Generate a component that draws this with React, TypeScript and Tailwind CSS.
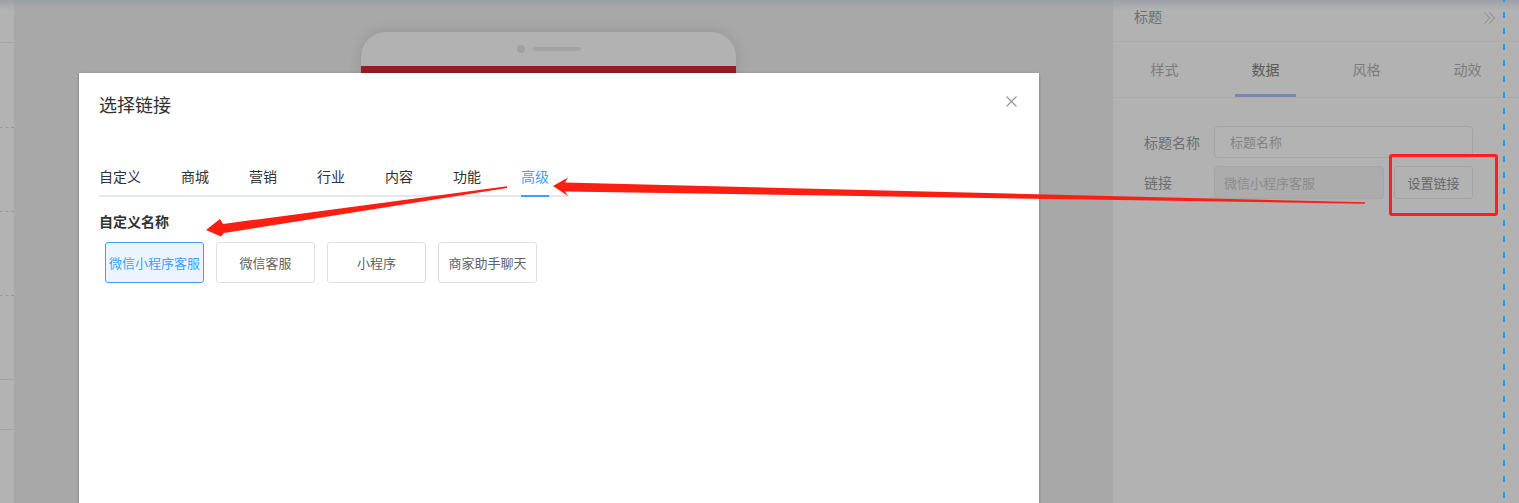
import React from "react";

const tabs = ["自定义", "商城", "营销", "行业", "内容", "功能", "高级"];
const options = ["微信小程序客服", "微信客服", "小程序", "商家助手聊天"];
const panelTabs = ["样式", "数据", "风格", "动效"];

function Arrows() {
  return (
    <svg
      className="absolute left-0 top-0 pointer-events-none"
      width={1519}
      height={503}
      viewBox="0 0 1519 503"
    >
      <polygon
        fill="#fb1e12"
        points="553,186 568,177.5 565,182.5 1365,202.3 1365,203.7 565,191.5 568,196"
      />
      <polygon
        fill="#fb1e12"
        points="206,230 220,219 223,224 507,186.3 507,188 224,233 221,236.5"
      />
      <line
        x1={1504}
        y1={0}
        x2={1504}
        y2={503}
        stroke="#1a9dff"
        strokeWidth={2}
        strokeDasharray="6 10"
        strokeDashoffset={4}
      />
    </svg>
  );
}

export default function App() {
  return (
    <div className="relative w-[1519px] h-[503px] overflow-hidden bg-[#a8a8a8] font-['Noto_Sans_CJK_SC',sans-serif]">
      <div className="flex h-full">
        {/* left strip */}
        <div className="w-[14px] h-full bg-[#b3b3b3] flex flex-col shrink-0">
          <div className="h-[43px] border-b border-[#a5a5a5]" />
          <div className="h-[85px] border-b border-dashed border-[#999999]" />
          <div className="h-[84px] border-b border-dashed border-[#999999]" />
          <div className="h-[84px] border-b border-dashed border-[#999999]" />
          <div className="h-[84px] border-b border-[#a3a3a3]" />
          <div className="h-[50px] border-b border-[#a3a3a3]" />
        </div>

        {/* canvas */}
        <div className="flex-1 pl-[347px] pt-[32px]">
          <div className="w-[375px] shadow-[0_0_14px_rgba(0,0,0,0.12)] rounded-t-[25px] overflow-hidden">
            <div className="h-[34px] bg-[#b2b2b2] flex items-center justify-center gap-2">
              <div className="w-[8px] h-[8px] rounded-full bg-[#a1a1a1]" />
              <div className="w-[48px] h-[4px] rounded-full bg-[#a3a3a3]" />
            </div>
            <div className="h-[40px] bg-[#8f2020]" />
          </div>
        </div>

        {/* right panel */}
        <div className="w-[406px] shrink-0 bg-[#b2b2b2] h-full">
          <div className="h-[42px] border-b border-[#aaaaaa] flex items-start pl-[21px] pt-[6px] relative">
            <span className="text-[14px] leading-[20px] text-[#6f6f6f]">标题</span>
            <svg
              className="absolute left-[371px] top-[12px]"
              width={12}
              height={12}
              viewBox="0 0 12 12"
              fill="none"
              stroke="#8a8a8a"
              strokeWidth={1}
            >
              <polyline points="0.5,0.5 5.5,6 0.5,11.5" />
              <polyline points="5.5,0.5 10.5,6 5.5,11.5" />
            </svg>
          </div>
          <div className="h-[56px] border-b border-[#aaaaaa] flex pl-[1px]">
            {panelTabs.map((t, i) => (
              <div
                key={t}
                className={
                  "relative w-[101px] h-full flex items-center justify-center text-[14px] " +
                  (i === 1 ? "text-[#5a5a5a]" : "text-[#7c7c7c]")
                }
              >
                {t}
                {i === 1 && (
                  <div className="absolute left-[20px] right-[20px] bottom-0 h-[3px] bg-[#7a86b4]" />
                )}
              </div>
            ))}
          </div>
          <div className="pl-[31px] pt-[28px] flex flex-col gap-[8px]">
            <div className="flex items-center">
              <div className="w-[70px] text-[14px] text-[#6e6e6e]">标题名称</div>
              <div className="w-[259px] h-[32px] border border-[#a4a4a4] rounded-[4px] bg-[#b3b3b3] pl-[15px] flex items-center text-[13px] text-[#838383]">
                标题名称
              </div>
            </div>
            <div className="flex items-center">
              <div className="w-[70px] text-[14px] text-[#6e6e6e]">链接</div>
              <div className="w-[170px] h-[33px] border border-[#a6a6a6] rounded-[4px] bg-[#acacac] pl-[9px] flex items-center text-[13px] text-[#8b8b8b]">
                微信小程序客服
              </div>
              <div className="ml-[10px] w-[79px] h-[33px] border border-[#a4a4a4] rounded-[3px] bg-[#b2b2b2] flex items-center justify-center text-[13px] text-[#666666]">
                设置链接
              </div>
            </div>
          </div>
        </div>
      </div>

      {/* top shade */}
      <div className="absolute left-0 top-0 w-full h-[10px] bg-gradient-to-b from-[#9ca0a7] to-transparent pointer-events-none" />

      {/* modal */}
      <div className="absolute left-[79px] top-[73px] w-[960px] h-[440px] bg-white shadow-[0_1px_3px_rgba(0,0,0,0.3)]">
        <div className="pl-[20px] pt-[19px] text-[18px] leading-[24px] text-[#303133]">选择链接</div>
        <svg
          className="absolute left-[927px] top-[23px]"
          width={11}
          height={11}
          viewBox="0 0 11 11"
          stroke="#909399"
          strokeWidth={1.1}
        >
          <line x1={0.5} y1={0.5} x2={10.5} y2={10.5} />
          <line x1={10.5} y1={0.5} x2={0.5} y2={10.5} />
        </svg>

        <div className="ml-[20px] mt-[41px] inline-flex h-[40px] border-b-2 border-[#e4e7ed]">
          {tabs.map((t, i) => (
            <div
              key={t}
              className={
                "relative h-full leading-[38px] text-[14px] px-[20px] " +
                (i === 0 ? "pl-0 " : "") +
                (i === tabs.length - 1 ? "text-[#409eff]" : "text-[#303133]")
              }
            >
              {t}
              {i === tabs.length - 1 && (
                <div className="absolute left-[20px] right-[20px] -bottom-[2px] h-[2px] bg-[#409eff]" />
              )}
            </div>
          ))}
        </div>

        <div className="ml-[20px] mt-[14px] text-[14px] leading-[20px] font-bold text-[#303133]">自定义名称</div>
        <div className="ml-[26px] mt-[11px] flex gap-[12px]">
          {options.map((o, i) => (
            <div
              key={o}
              className={
                "w-[99px] h-[41px] rounded-[3px] border flex items-center justify-center text-[13px] " +
                (i === 0
                  ? "border-[#409eff] bg-[#ecf5ff] text-[#409eff]"
                  : "border-[#dcdfe6] bg-white text-[#606266]")
              }
            >
              {o}
            </div>
          ))}
        </div>
      </div>

      {/* red highlight box */}
      <div className="absolute left-[1389px] top-[154px] w-[109px] h-[62px] border-[3px] border-[#ff1f1f] rounded-[3px] pointer-events-none" />

      <Arrows />
    </div>
  );
}
